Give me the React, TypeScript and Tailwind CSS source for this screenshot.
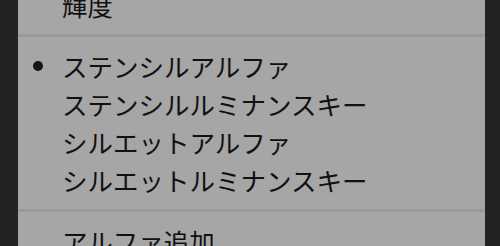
import React from 'react';

type Item = { label: string; checked?: boolean };

const groups: Item[][] = [
  [{ label: '輝度' }],
  [
    { label: 'ステンシルアルファ', checked: true },
    { label: 'ステンシルルミナンスキー' },
    { label: 'シルエットアルファ' },
    { label: 'シルエットルミナンスキー' },
  ],
  [{ label: 'アルファ追加' }],
];

function MenuRow({ item }: { item: Item }) {
  return (
    <div className="flex h-[38px] items-center">
      <div className="flex w-[44px] shrink-0 items-center">
        {item.checked && <div className="ml-[15px] h-[10px] w-[10px] rounded-full bg-[#151515]" />}
      </div>
      <span className="whitespace-nowrap text-[25.5px] leading-none text-[#111]">{item.label}</span>
    </div>
  );
}

export default function App() {
  return (
    <div
      className="flex h-[246px] w-[500px] overflow-hidden bg-[#232323]"
      style={{ fontFamily: '"Noto Sans CJK JP", "Noto Sans", sans-serif' }}
    >
      {/* left edge of the window behind */}
      <div className="w-[18px] shrink-0 bg-[#232323]" />

      {/* context menu */}
      <div className="flex-1 bg-[#a6a6a6]">
        <div className="mt-[-14px] flex flex-col">
          {groups.map((group, gi) => (
            <React.Fragment key={gi}>
              {gi > 0 && <div className="my-[10px] h-[3px] bg-[#999999]" />}
              {group.map((item) => (
                <MenuRow key={item.label} item={item} />
              ))}
            </React.Fragment>
          ))}
        </div>
      </div>

      <div className="w-[15px] shrink-0 bg-[#232323]" />
    </div>
  );
}
